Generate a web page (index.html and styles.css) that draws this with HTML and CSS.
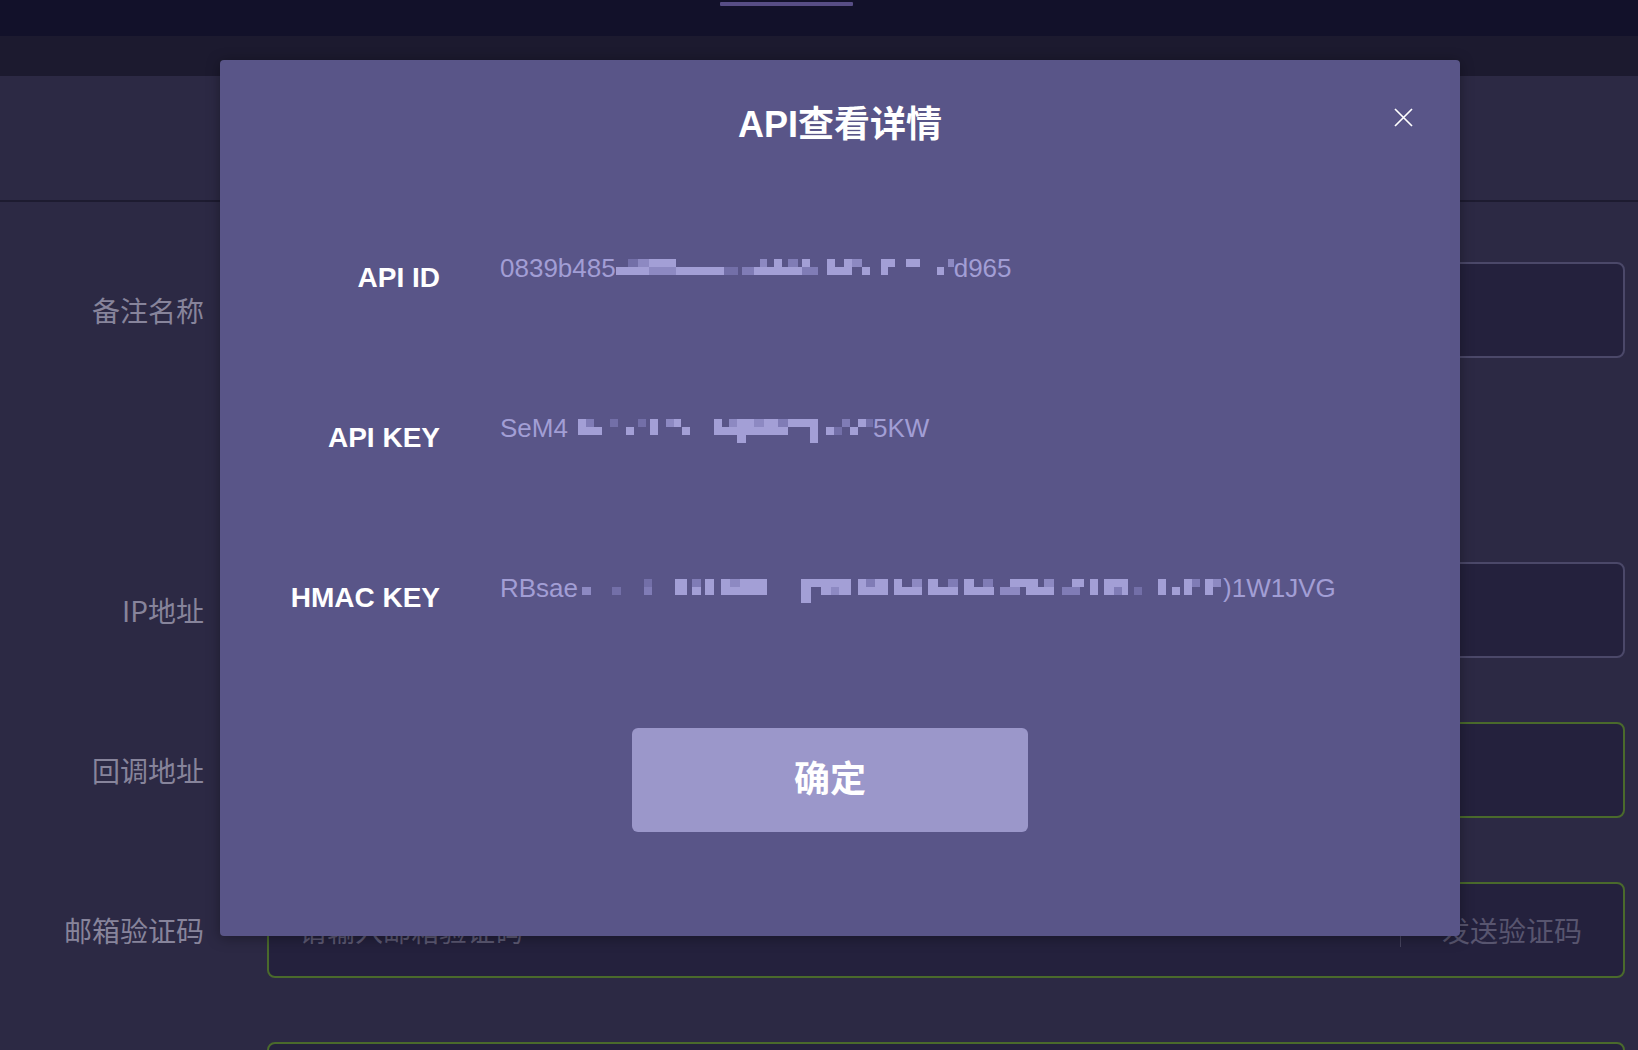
FILE: index.html
```html
<!DOCTYPE html>
<html lang="zh-CN">
<head>
<meta charset="utf-8">
<title>API查看详情</title>
<link rel="stylesheet" href="styles.css">
</head>
<body>
<div class="page">
  <div class="topbar"><div class="indicator"></div></div>
  <div class="subbar"></div>
  <div class="section"></div>
  <div class="form">
    <div class="form-row row-first">
      <div class="form-label">备注名称</div>
      <div class="input input-grey"></div>
    </div>
    <div class="form-row">
      <div class="form-label">IP地址</div>
      <div class="input input-grey"></div>
    </div>
    <div class="form-row">
      <div class="form-label">回调地址</div>
      <div class="input input-green"></div>
    </div>
    <div class="form-row">
      <div class="form-label">邮箱验证码</div>
      <div class="input input-green input-code">
        <span class="placeholder">请输入邮箱验证码</span>
        <span class="sep"></span>
        <span class="send">发送验证码</span>
      </div>
    </div>
    <div class="form-row">
      <div class="form-label"></div>
      <div class="input input-green"></div>
    </div>
  </div>

  <div class="modal">
    <div class="modal-title">API查看详情</div>
    <button class="close" aria-label="close">
      <svg width="19" height="19" viewBox="0 0 19 19"><path d="M1 1 L18 18 M18 1 L1 18" stroke="#ffffff" stroke-width="1.7" fill="none"/></svg>
    </button>
    <div class="rows">
      <div class="row">
        <div class="label">API ID</div>
        <div class="value">0839b485<svg class="mosaic m16" width="338" height="16" viewBox="0 0 338 16">
          <rect x="0" y="8" width="34" height="8" fill="#a39fd6"/>
          <rect x="12" y="0" width="10" height="8" fill="#736fa8"/>
          <rect x="22" y="0" width="11" height="8" fill="#8d89c2"/>
          <rect x="33" y="0" width="27" height="8" fill="#a39fd6"/>
          <rect x="33" y="8" width="27" height="8" fill="#8d89c2"/>
          <rect x="60" y="8" width="48" height="8" fill="#a39fd6"/>
          <rect x="108" y="8" width="14" height="8" fill="#736fa8"/>
          <rect x="126" y="8" width="12" height="8" fill="#807cb6"/>
          <rect x="138" y="8" width="48" height="8" fill="#a39fd6"/>
          <rect x="144" y="0" width="7" height="8" fill="#8d89c2"/>
          <rect x="158" y="0" width="8" height="8" fill="#a39fd6"/>
          <rect x="172" y="0" width="10" height="8" fill="#807cb6"/>
          <rect x="186" y="8" width="16" height="8" fill="#807cb6"/>
          <rect x="186" y="0" width="8" height="8" fill="#a39fd6"/>
          <rect x="211" y="0" width="8" height="16" fill="#a39fd6"/>
          <rect x="219" y="8" width="17" height="8" fill="#a39fd6"/>
          <rect x="228" y="0" width="8" height="8" fill="#a39fd6"/>
          <rect x="236" y="0" width="10" height="8" fill="#8d89c2"/>
          <rect x="246" y="8" width="8" height="8" fill="#a39fd6"/>
          <rect x="265" y="0" width="7" height="16" fill="#a39fd6"/>
          <rect x="272" y="0" width="7" height="8" fill="#a39fd6"/>
          <rect x="290" y="0" width="14" height="8" fill="#a39fd6"/>
          <rect x="321" y="8" width="7" height="8" fill="#a39fd6"/>
          <rect x="332" y="0" width="6" height="8" fill="#8d89c2"/>
        </svg>d965</div>
      </div>
      <div class="row">
        <div class="label">API KEY</div>
        <div class="value">SeM4<svg class="mosaic m24" width="305" height="24" viewBox="0 0 305 24">
          <rect x="10" y="0" width="8" height="8" fill="#a39fd6"/>
          <rect x="10" y="8" width="24" height="8" fill="#a39fd6"/>
          <rect x="18" y="0" width="8" height="8" fill="#807cb6"/>
          <rect x="42" y="0" width="8" height="8" fill="#736fa8"/>
          <rect x="58" y="8" width="8" height="8" fill="#a39fd6"/>
          <rect x="70" y="0" width="8" height="8" fill="#736fa8"/>
          <rect x="82" y="0" width="8" height="16" fill="#a39fd6"/>
          <rect x="98" y="0" width="15" height="8" fill="#8d89c2"/>
          <rect x="106" y="0" width="7" height="8" fill="#a39fd6"/>
          <rect x="114" y="8" width="8" height="8" fill="#a39fd6"/>
          <rect x="146" y="0" width="8" height="16" fill="#a39fd6"/>
          <rect x="154" y="8" width="15" height="8" fill="#a39fd6"/>
          <rect x="161" y="0" width="8" height="8" fill="#8d89c2"/>
          <rect x="169" y="0" width="9" height="24" fill="#a39fd6"/>
          <rect x="178" y="0" width="32" height="16" fill="#a39fd6"/>
          <rect x="186" y="0" width="10" height="8" fill="#8d89c2"/>
          <rect x="210" y="0" width="10" height="8" fill="#807cb6"/>
          <rect x="210" y="8" width="10" height="8" fill="#a39fd6"/>
          <rect x="220" y="0" width="22" height="8" fill="#a39fd6"/>
          <rect x="242" y="0" width="8" height="24" fill="#a39fd6"/>
          <rect x="258" y="8" width="8" height="8" fill="#a39fd6"/>
          <rect x="266" y="8" width="8" height="8" fill="#736fa8"/>
          <rect x="274" y="0" width="8" height="8" fill="#807cb6"/>
          <rect x="282" y="8" width="8" height="8" fill="#a39fd6"/>
          <rect x="290" y="0" width="8" height="8" fill="#a39fd6"/>
          <rect x="298" y="0" width="7" height="8" fill="#736fa8"/>
        </svg>5KW</div>
      </div>
      <div class="row">
        <div class="label">HMAC KEY</div>
        <div class="value">RBsae<svg class="mosaic m24" width="645" height="24" viewBox="0 0 645 24">
          <rect x="4" y="8" width="9" height="8" fill="#8d89c2"/>
          <rect x="34" y="8" width="9" height="8" fill="#736fa8"/>
          <rect x="66" y="0" width="8" height="8" fill="#736fa8"/>
          <rect x="66" y="8" width="8" height="8" fill="#807cb6"/>
          <rect x="97" y="0" width="12" height="16" fill="#a39fd6"/>
          <rect x="114" y="8" width="9" height="8" fill="#a39fd6"/>
          <rect x="114" y="0" width="9" height="8" fill="#807cb6"/>
          <rect x="127" y="0" width="9" height="16" fill="#a39fd6"/>
          <rect x="143" y="0" width="46" height="16" fill="#a39fd6"/>
          <rect x="152" y="0" width="10" height="8" fill="#8d89c2"/>
          <rect x="223" y="0" width="10" height="24" fill="#a39fd6"/>
          <rect x="233" y="0" width="40" height="8" fill="#a39fd6"/>
          <rect x="243" y="8" width="30" height="8" fill="#a39fd6"/>
          <rect x="253" y="8" width="8" height="8" fill="#8d89c2"/>
          <rect x="280" y="0" width="30" height="16" fill="#a39fd6"/>
          <rect x="288" y="0" width="9" height="8" fill="#807cb6"/>
          <rect x="316" y="0" width="8" height="16" fill="#a39fd6"/>
          <rect x="324" y="8" width="20" height="8" fill="#a39fd6"/>
          <rect x="334" y="0" width="10" height="8" fill="#8d89c2"/>
          <rect x="350" y="0" width="10" height="16" fill="#a39fd6"/>
          <rect x="360" y="8" width="20" height="8" fill="#a39fd6"/>
          <rect x="370" y="0" width="10" height="8" fill="#807cb6"/>
          <rect x="386" y="0" width="10" height="8" fill="#a39fd6"/>
          <rect x="386" y="8" width="30" height="8" fill="#a39fd6"/>
          <rect x="405" y="0" width="10" height="8" fill="#807cb6"/>
          <rect x="422" y="8" width="20" height="8" fill="#8d89c2"/>
          <rect x="432" y="0" width="28" height="8" fill="#a39fd6"/>
          <rect x="448" y="8" width="28" height="8" fill="#a39fd6"/>
          <rect x="466" y="0" width="10" height="8" fill="#8d89c2"/>
          <rect x="484" y="8" width="18" height="8" fill="#807cb6"/>
          <rect x="494" y="0" width="12" height="8" fill="#a39fd6"/>
          <rect x="512" y="0" width="8" height="16" fill="#a39fd6"/>
          <rect x="526" y="0" width="24" height="16" fill="#a39fd6"/>
          <rect x="536" y="8" width="8" height="8" fill="#807cb6"/>
          <rect x="556" y="8" width="8" height="8" fill="#736fa8"/>
          <rect x="580" y="0" width="8" height="16" fill="#a39fd6"/>
          <rect x="594" y="8" width="8" height="8" fill="#a39fd6"/>
          <rect x="606" y="0" width="8" height="16" fill="#a39fd6"/>
          <rect x="614" y="0" width="8" height="8" fill="#807cb6"/>
          <rect x="627" y="0" width="8" height="16" fill="#a39fd6"/>
          <rect x="635" y="0" width="8" height="8" fill="#8d89c2"/>
        </svg>)1W1JVG</div>
      </div>
    </div>
    <div class="actions">
      <button class="confirm">确定</button>
    </div>
  </div>
</div>
</body>
</html>
```

FILE: styles.css
```css
* {
  box-sizing: border-box;
}

html, body {
  margin: 0;
  padding: 0;
}

body {
  width: 1638px;
  height: 1050px;
  overflow: hidden;
  background: #2c2944;
  font-family: "Liberation Sans", "Noto Sans CJK SC", sans-serif;
}

.page {
  position: relative;
  width: 1638px;
  height: 1050px;
  overflow: hidden;
  background: #2c2944;
}

.topbar {
  height: 36px;
  background: #12112a;
  display: flex;
  padding: 2px 0 0 720px;
}

.indicator {
  width: 133px;
  height: 4px;
  background: #574d85;
  border-radius: 1px;
}

.subbar {
  height: 40px;
  background: #1c1a2f;
}

.section {
  height: 126px;
  background: #2c2944;
  border-bottom: 2px solid #1d1b30;
}

.form {
  padding-top: 60px;
  display: flex;
  flex-direction: column;
}

.form-row {
  display: flex;
  align-items: center;
  height: 96px;
  margin-bottom: 64px;
  flex-shrink: 0;
}

.row-first {
  margin-bottom: 204px;
}

.form-label {
  width: 204px;
  margin-right: 63px;
  text-align: right;
  font-size: 28px;
  color: #87849b;
  font-family: "Noto Sans CJK SC", "Liberation Sans", sans-serif;
  white-space: nowrap;
}

.input {
  width: 1358px;
  height: 96px;
  border-radius: 8px;
  background: #24213d;
  border: 2px solid #4b4869;
}

.input-green {
  border-color: #4a6a2c;
}

.input-code {
  display: flex;
  align-items: center;
  padding: 0 41px 0 30px;
  font-family: "Noto Sans CJK SC", "Liberation Sans", sans-serif;
  font-size: 28px;
}

.placeholder {
  flex: 1;
  color: #5c5973;
}

.sep {
  width: 1px;
  height: 34px;
  background: #46435e;
  margin-right: 41px;
}

.send {
  color: #58556f;
}

.modal {
  position: absolute;
  left: 220px;
  top: 60px;
  width: 1240px;
  background: #595588;
  border-radius: 4px;
  box-shadow: 0 2px 14px rgba(0, 0, 0, 0.35);
  padding: 45px 0 104px 0;
  display: flex;
  flex-direction: column;
}

.modal-title {
  height: 40px;
  line-height: 40px;
  font-size: 36px;
  font-weight: 600;
  color: #ffffff;
  text-align: center;
}

.close {
  position: absolute;
  right: 47px;
  top: 48px;
  width: 19px;
  height: 19px;
  padding: 0;
  border: 0;
  background: transparent;
  display: block;
}

.close svg {
  display: block;
}

.rows {
  margin-top: 110px;
  display: flex;
  flex-direction: column;
  gap: 134px;
}

.row {
  display: flex;
  align-items: flex-start;
  height: 26px;
}

.label {
  width: 220px;
  flex-shrink: 0;
  margin-top: 9px;
  text-align: right;
  font-size: 28px;
  line-height: 28px;
  font-weight: 700;
  color: #ffffff;
  white-space: nowrap;
}

.value {
  margin-left: 60px;
  font-size: 26px;
  line-height: 26px;
  color: #a29ed5;
  white-space: nowrap;
}

.mosaic {
  display: inline-block;
}

.m16 {
  vertical-align: 2px;
}

.m24 {
  vertical-align: -6px;
}

.actions {
  margin-top: 127px;
  display: flex;
  padding-left: 412px;
}

.confirm {
  width: 396px;
  height: 104px;
  border: 0;
  border-radius: 6px;
  background: #9b97ca;
  color: #ffffff;
  font-family: "Noto Sans CJK SC", "Liberation Sans", sans-serif;
  font-size: 36px;
  font-weight: 700;
  display: flex;
  align-items: center;
  justify-content: center;
  padding: 0 0 8px 0;
}
```
